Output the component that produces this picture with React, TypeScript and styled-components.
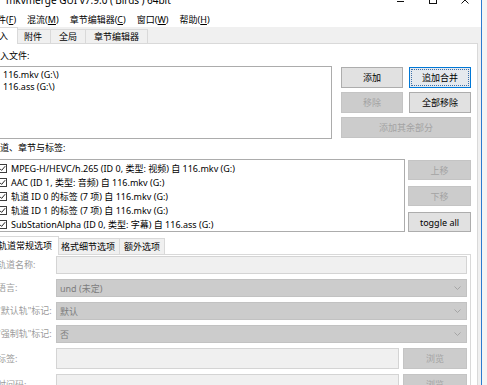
import React from "react";
import styled, { createGlobalStyle, css } from "styled-components";

const GlobalStyle = createGlobalStyle`
  html, body { margin: 0; padding: 0; overflow: hidden; }
  body { font-family: "Noto Sans", "Noto Sans CJK SC", sans-serif; font-size: 9px; color: #000; }
  * { box-sizing: border-box; }
`;

const Screen = styled.div`
  width: 487px;
  height: 385px;
  overflow: hidden;
  background: #f4f4f4;
  display: flex;
  align-items: flex-start;
`;

const Window = styled.div`
  flex: none;
  width: 501px;
  height: 430px;
  margin-left: -19px;
  display: flex;
  flex-direction: column;
  background: #f0f0f0;
  border-right: 1px solid #2b7bd0;
`;

const TitleBar = styled.div`
  height: 12px;
  flex: none;
  background: #fff;
  display: flex;
  overflow: hidden;
`;

const TitleText = styled.div`
  margin-top: -6px;
  line-height: 13px;
  font-size: 10px;
  padding-left: 25px;
  white-space: nowrap;
`;

const Controls = styled.div`
  margin-left: auto;
  display: flex;
`;

const Control = styled.div`
  width: 32px;
  height: 12px;
  display: flex;
  justify-content: center;
  svg { margin-top: -5px; }
`;

const MenuBar = styled.div`
  height: 15px;
  flex: none;
  background: #fff;
  display: flex;
  align-items: center;
  gap: 11px;
  padding-left: 7px;
  white-space: nowrap;
`;

const MenuItem = styled.span`
  line-height: 12px;
`;

const TabStrip = styled.div`
  height: 16px;
  flex: none;
  display: flex;
  align-items: flex-end;
  padding-left: 1px;
  position: relative;
  z-index: 1;
`;

const Tab = styled.div<{ $active?: boolean }>`
  height: 14px;
  padding: 0 8px;
  display: flex;
  align-items: center;
  white-space: nowrap;
  background: #f0f0f0;
  border: 1px solid #d9d9d9;
  border-bottom: none;
  margin-left: -1px;
  ${(p) =>
    p.$active &&
    css`
      height: 17px;
      margin: 0 -2px -1px -2px;
      padding: 0 9px 1px;
      background: #fff;
      position: relative;
      z-index: 2;
    `}
`;

const Panel = styled.div`
  flex: 1;
  margin: 0 3px 0 1px;
  background: #fff;
  border: 1px solid #d9d9d9;
  padding: 6px 6px 0 8px;
  display: flex;
  flex-direction: column;
  overflow: hidden;
`;

const SectionLabel = styled.div<{ $gap?: number }>`
  line-height: 12px;
  white-space: nowrap;
  margin-top: ${(p) => p.$gap ?? 0}px;
`;

const Row = styled.div<{ $gap: number; $top: number }>`
  display: flex;
  gap: ${(p) => p.$gap}px;
  margin-top: ${(p) => p.$top}px;
  align-items: flex-start;
`;

const ListBox = styled.div<{ $padLeft: number; $padTop: number }>`
  flex: 1;
  min-width: 0;
  height: 73px;
  border: 1px solid #acacac;
  background: #fff;
  padding: ${(p) => p.$padTop}px 0 0 ${(p) => p.$padLeft}px;
  overflow: hidden;
`;

const FileItem = styled.div`
  line-height: 12px;
  white-space: nowrap;
`;

const TrackItem = styled.div`
  height: 14px;
  display: flex;
  align-items: center;
  gap: 4px;
  white-space: nowrap;
`;

const ButtonGrid = styled.div`
  flex: none;
  width: 130px;
  margin-top: 1px;
  display: grid;
  grid-template-columns: 62px 62px;
  grid-auto-rows: 21px;
  column-gap: 6px;
  row-gap: 4px;
`;

const SideButtons = styled.div`
  flex: none;
  width: 63px;
  height: 72px;
  margin-top: 1px;
  display: flex;
  flex-direction: column;
  justify-content: space-between;
`;

const Button = styled.div<{ $disabled?: boolean; $focus?: boolean; $wide?: boolean; $h?: number }>`
  height: ${(p) => p.$h ?? 21}px;
  display: flex;
  align-items: center;
  justify-content: center;
  white-space: nowrap;
  background: #e1e1e1;
  border: 1px solid #adadad;
  color: #000;
  position: relative;
  ${(p) => p.$wide && css`grid-column: 1 / span 2;`}
  ${(p) =>
    p.$disabled &&
    css`
      background: #cccccc;
      border-color: #c4c4c4;
      color: #a3a3a3;
    `}
  ${(p) =>
    p.$focus &&
    css`
      background: #e5e9ee;
      border-color: #0078d7;
      &::after {
        content: "";
        position: absolute;
        inset: 1px;
        border: 1px dotted #3d6fa8;
      }
    `}
`;

const CheckBox = styled.span`
  flex: none;
  width: 9px;
  height: 9px;
  border: 1px solid #3c3c3c;
  background: #fff;
  display: flex;
  align-items: center;
  justify-content: center;
`;

const InnerTabs = styled.div`
  margin-top: 4px;
  display: flex;
  flex-direction: column;
`;

const InnerTabStrip = styled.div`
  height: 18px;
  display: flex;
  align-items: flex-end;
  padding-left: 2px;
  position: relative;
  z-index: 1;
`;

const InnerTab = styled.div<{ $active?: boolean }>`
  height: 16px;
  padding: 0 4px;
  display: flex;
  align-items: center;
  white-space: nowrap;
  background: #f0f0f0;
  border: 1px solid #d9d9d9;
  border-bottom: none;
  margin-left: -1px;
  ${(p) =>
    p.$active &&
    css`
      height: 19px;
      margin: 0 -2px -1px -2px;
      padding: 0 6px 1px;
      background: #fff;
      position: relative;
      z-index: 2;
    `}
`;

const InnerPanel = styled.div`
  border: 1px solid #d9d9d9;
  background: #fff;
  padding: 1px 3px 0 5px;
  height: 140px;
`;

const FormGrid = styled.div`
  display: grid;
  grid-template-columns: 59px 1fr;
  row-gap: 5px;
  align-items: center;
`;

const FieldLabel = styled.div`
  color: #9b9b9b;
  white-space: nowrap;
  line-height: 12px;
`;

const TextInput = styled.div<{ $h?: number }>`
  flex: 1;
  height: ${(p) => p.$h ?? 18}px;
  background: #f0f0f0;
  border: 1px solid #d4d4d4;
`;

const Combo = styled.div`
  height: 18px;
  background: #cccccc;
  border: 1px solid #c2c2c2;
  display: flex;
  align-items: center;
  padding: 0 5px 0 3px;
  color: #7d7d7d;
  white-space: nowrap;
  svg { margin-left: auto; }
`;

const FieldWithButton = styled.div`
  display: flex;
  gap: 4px;
  align-items: center;
`;

const BrowseButton = styled(Button)`
  flex: none;
  width: 64px;
`;

const Chevron = () => (
  <svg width="7" height="4" viewBox="0 0 7 4">
    <polyline points="0.5,0.5 3.5,3.5 6.5,0.5" fill="none" stroke="#a5a5a5" strokeWidth="1" />
  </svg>
);

const Check = () => (
  <svg width="7" height="7" viewBox="0 0 7 7">
    <polyline points="0.8,3.6 2.6,5.4 6.2,1.2" fill="none" stroke="#222" strokeWidth="1" />
  </svg>
);

const files = ["116.mkv (G:\\)", "116.ass (G:\\)"];
const tracks = [
  "MPEG-H/HEVC/h.265 (ID 0, 类型: 视频) 自 116.mkv (G:)",
  "AAC (ID 1, 类型: 音频) 自 116.mkv (G:)",
  "轨道 ID 0 的标签 (7 项) 自 116.mkv (G:)",
  "轨道 ID 1 的标签 (7 项) 自 116.mkv (G:)",
  "SubStationAlpha (ID 0, 类型: 字幕) 自 116.ass (G:)",
];

export default function App() {
  return (
    <>
      <GlobalStyle />
      <Screen>
        <Window>
          <TitleBar>
            <TitleText>mkvmerge GUI v7.9.0 ('Birds') 64bit</TitleText>
            <Controls>
              <Control>
                <svg width="10" height="10" viewBox="0 0 10 10">
                  <line x1="1" y1="6.5" x2="8" y2="6.5" stroke="#111" strokeWidth="1" />
                </svg>
              </Control>
              <Control>
                <svg width="10" height="10" viewBox="0 0 10 10">
                  <rect x="1.5" y="1.5" width="7" height="7" fill="none" stroke="#111" strokeWidth="1" />
                </svg>
              </Control>
              <Control>
                <svg width="10" height="10" viewBox="0 0 10 10">
                  <path d="M1.5 1.5 L8.5 8.5 M8.5 1.5 L1.5 8.5" stroke="#111" strokeWidth="1" />
                </svg>
              </Control>
            </Controls>
          </TitleBar>
          <MenuBar>
            <MenuItem>文件(<u>F</u>)</MenuItem>
            <MenuItem>混流(<u>M</u>)</MenuItem>
            <MenuItem>章节编辑器(<u>C</u>)</MenuItem>
            <MenuItem>窗口(<u>W</u>)</MenuItem>
            <MenuItem>帮助(<u>H</u>)</MenuItem>
          </MenuBar>
          <TabStrip>
            <Tab $active>输入</Tab>
            <Tab>附件</Tab>
            <Tab>全局</Tab>
            <Tab>章节编辑器</Tab>
          </TabStrip>
          <Panel>
            <SectionLabel>输入文件:</SectionLabel>
            <Row $gap={9} $top={4}>
              <ListBox $padLeft={11} $padTop={2}>
                {files.map((f) => (
                  <FileItem key={f}>{f}</FileItem>
                ))}
              </ListBox>
              <ButtonGrid>
                <Button>添加</Button>
                <Button $focus>追加合并</Button>
                <Button $disabled>移除</Button>
                <Button>全部移除</Button>
                <Button $disabled $wide>添加其余部分</Button>
              </ButtonGrid>
            </Row>
            <SectionLabel $gap={3}>轨道、章节与标签:</SectionLabel>
            <Row $gap={3} $top={5}>
              <ListBox $padLeft={6} $padTop={1}>
                {tracks.map((t) => (
                  <TrackItem key={t}>
                    <CheckBox>
                      <Check />
                    </CheckBox>
                    {t}
                  </TrackItem>
                ))}
              </ListBox>
              <SideButtons>
                <Button $disabled $h={20}>上移</Button>
                <Button $disabled $h={20}>下移</Button>
                <Button $h={20}>toggle all</Button>
              </SideButtons>
            </Row>
            <InnerTabs>
              <InnerTabStrip>
                <InnerTab $active>轨道常规选项</InnerTab>
                <InnerTab>格式细节选项</InnerTab>
                <InnerTab>额外选项</InnerTab>
              </InnerTabStrip>
              <InnerPanel>
                <FormGrid>
                  <FieldLabel>轨道名称:</FieldLabel>
                  <TextInput />
                  <FieldLabel>语言:</FieldLabel>
                  <Combo>
                    und (未定)
                    <Chevron />
                  </Combo>
                  <FieldLabel>"默认轨"标记:</FieldLabel>
                  <Combo>
                    默认
                    <Chevron />
                  </Combo>
                  <FieldLabel>"强制轨"标记:</FieldLabel>
                  <Combo>
                    否
                    <Chevron />
                  </Combo>
                  <FieldLabel>标签:</FieldLabel>
                  <FieldWithButton>
                    <TextInput $h={21} />
                    <BrowseButton $disabled>浏览</BrowseButton>
                  </FieldWithButton>
                  <FieldLabel>时间码:</FieldLabel>
                  <FieldWithButton>
                    <TextInput $h={21} />
                    <BrowseButton $disabled>浏览</BrowseButton>
                  </FieldWithButton>
                </FormGrid>
              </InnerPanel>
            </InnerTabs>
          </Panel>
        </Window>
      </Screen>
    </>
  );
}
